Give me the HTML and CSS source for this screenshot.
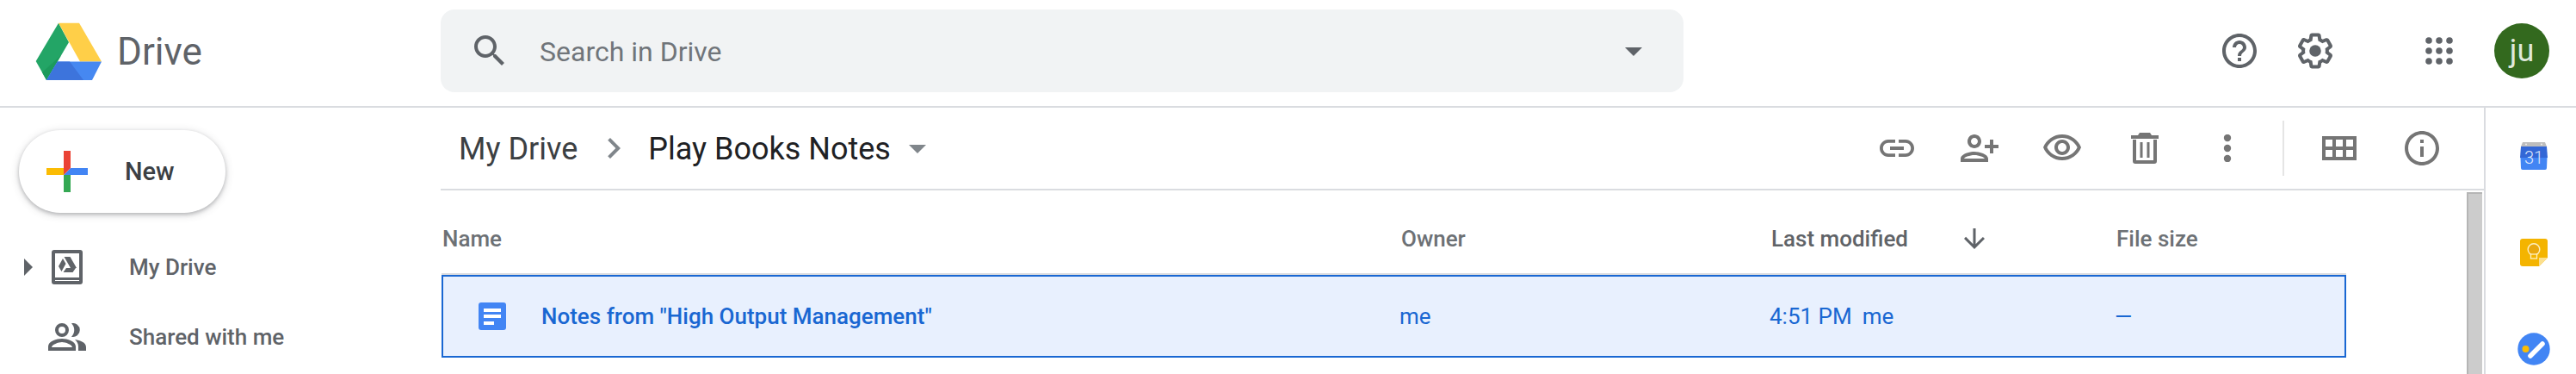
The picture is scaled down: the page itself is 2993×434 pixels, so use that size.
FILE: index.html
```html
<!DOCTYPE html>
<html lang="en">
<head>
<meta charset="utf-8">
<title>Play Books Notes - Google Drive</title>
<link rel="stylesheet" href="styles.css">
</head>
<body>
<header class="topbar">
  <div class="brand">
    <svg class="brand-logo" viewBox="0 0 77 67" width="77" height="67">
      <polygon fill="#23a566" points="27,.7 39,23 13,67 .7,45"/>
      <polygon fill="#1c9a5c" points="39,23 13,67 8,58 30,38"/>
      <polygon fill="#ffcf48" points="27,.7 51,.7 77,45.6 52,45.6"/>
      <polygon fill="#4688f1" points="25.7,45.6 77,45.6 66,67 13,67"/>
      <polygon fill="#3d74dc" points="25.7,45.6 40,45.6 56,67 13,67"/>
    </svg>
    <span class="brand-name">Drive</span>
  </div>
  <div class="search">
    <svg class="icon48 fill-grey" viewBox="0 0 24 24"><path d="M15.5 14h-.79l-.28-.27C15.41 12.59 16 11.11 16 9.5 16 5.91 13.09 3 9.5 3S3 5.91 3 9.5 5.91 16 9.5 16c1.61 0 3.09-.59 4.23-1.57l.27.28v.79l5 4.99L20.49 19l-4.99-5zm-6 0C7.01 14 5 11.99 5 9.5S7.01 5 9.5 5 14 7.01 14 9.5 11.99 14 9.5 14z"/></svg>
    <span class="search-text">Search in Drive</span>
    <svg class="icon48 fill-grey" viewBox="0 0 24 24"><path d="M7 10l5 5 5-5z"/></svg>
  </div>
  <div class="actions">
    <svg class="icon48 fill-grey" viewBox="0 0 24 24"><path d="M11 18h2v-2h-2v2zm1-16C6.48 2 2 6.48 2 12s4.48 10 10 10 10-4.48 10-10S17.52 2 12 2zm0 18c-4.41 0-8-3.59-8-8s3.59-8 8-8 8 3.59 8 8-3.59 8-8 8zm0-14c-2.21 0-4 1.79-4 4h2c0-1.1.9-2 2-2s2 .9 2 2c0 2-3 1.75-3 5h2c0-2.25 3-2.5 3-5 0-2.21-1.79-4-4-4z"/></svg>
    <svg class="icon48 gear fill-grey" viewBox="0 0 24 24"><path d="M13.85 22.25h-3.7c-.74 0-1.36-.54-1.45-1.27l-.27-1.89c-.27-.14-.53-.29-.79-.46l-1.8.72c-.7.26-1.47-.03-1.81-.65L2.2 15.53c-.35-.66-.2-1.44.36-1.88l1.53-1.19c-.01-.15-.02-.3-.02-.46 0-.15.01-.31.02-.46l-1.52-1.19c-.59-.45-.74-1.26-.37-1.88l1.85-3.19c.34-.62 1.11-.9 1.79-.63l1.81.73c.26-.17.52-.32.78-.46l.27-1.91c.09-.7.71-1.25 1.44-1.25h3.7c.74 0 1.36.54 1.45 1.27l.27 1.89c.27.14.53.29.79.46l1.8-.72c.71-.26 1.48.03 1.82.65l1.84 3.18c.36.66.2 1.44-.36 1.88l-1.52 1.19c.01.15.02.3.02.46s-.01.31-.02.46l1.52 1.19c.56.45.72 1.23.37 1.86l-1.86 3.22c-.34.62-1.11.9-1.8.63l-1.8-.72c-.26.17-.52.32-.78.46l-.27 1.91c-.1.68-.72 1.22-1.45 1.22zm-3.23-2h2.76l.37-2.55.53-.22c.44-.18.88-.44 1.34-.78l.45-.34 2.38.96 1.38-2.4-2.03-1.58.07-.56c.03-.26.06-.51.06-.78s-.03-.53-.06-.78l-.07-.56 2.03-1.58-1.39-2.4-2.39.96-.45-.35c-.42-.32-.87-.58-1.33-.77l-.52-.22-.37-2.55h-2.76l-.37 2.55-.53.21c-.44.19-.88.44-1.34.79l-.45.33-2.38-.95-1.39 2.39 2.03 1.58-.07.56a7 7 0 0 0-.06.79c0 .26.02.53.06.78l.07.56-2.03 1.58 1.38 2.4 2.39-.96.45.35c.43.33.86.58 1.33.77l.53.22.38 2.55z"/><circle cx="12" cy="12" r="3.4"/></svg>
    <svg class="apps fill-grey" viewBox="0 0 32 32" width="32" height="32">
      <circle cx="4" cy="4" r="3.8"/><circle cx="16" cy="4" r="3.8"/><circle cx="28" cy="4" r="3.8"/>
      <circle cx="4" cy="16" r="3.8"/><circle cx="16" cy="16" r="3.8"/><circle cx="28" cy="16" r="3.8"/>
      <circle cx="4" cy="28" r="3.8"/><circle cx="16" cy="28" r="3.8"/><circle cx="28" cy="28" r="3.8"/>
    </svg>
    <div class="avatar">ju</div>
  </div>
</header>
<div class="workspace">
  <nav class="sidebar">
    <button class="new-btn">
      <svg viewBox="0 0 48 48" width="48" height="48">
        <rect fill="#fbbc04" x="0" y="20" width="20" height="8"/>
        <rect fill="#34a853" x="20" y="28" width="8" height="20"/>
        <polygon fill="#4285f4" points="28,20 48,20 48,28 20,28"/>
        <polygon fill="#ea4335" points="20,0 28,0 28,20 20,28"/>
      </svg>
      <span>New</span>
    </button>
    <div class="nav-item">
      <svg class="nav-caret fill-grey" viewBox="0 0 10 20" width="10" height="20"><path d="M0 0l10 10-10 10z"/></svg>
      <span class="nav-icon">
        <svg class="fill-grey" viewBox="0 0 36 40" width="36" height="40">
          <path fill-rule="evenodd" d="M3 0h30a3 3 0 0 1 3 3v34a3 3 0 0 1-3 3H3a3 3 0 0 1-3-3V3a3 3 0 0 1 3-3zm1 4v28h28V4zm0 31v1h28v-1z"/>
          <path d="M14.5 8h7l7.500 13h-7zM13 10l3.500 6-5 9-3.500-6zM17 21h11l-3.500 5h-11z"/>
        </svg>
      </span>
      <span class="nav-label">My Drive</span>
    </div>
    <div class="nav-item">
      <span class="nav-caret"></span>
      <span class="nav-icon">
        <svg class="fill-grey" viewBox="0 0 44 32" width="44" height="32">
          <path fill-rule="evenodd" d="M16 0a8 8 0 1 1 0 16 8 8 0 0 1 0-16zm0 4a4 4 0 1 0 0 8 4 4 0 0 0 0-8z"/>
          <path d="M27 .2a8 8 0 1 1 0 15.600a11 11 0 0 0 0-15.600z"/>
          <path fill-rule="evenodd" d="M0 32v-5c0-6 10-9 16-9s16 3 16 9v5zm4-4h24c0-3-8-6-12-6S4 25 4 28z"/>
          <path d="M31 19c6 1 13 3 13 9v4h-9v-5c0-3-1.500-6-4-8z"/>
        </svg>
      </span>
      <span class="nav-label">Shared with me</span>
    </div>
  </nav>
  <main class="content">
    <div class="toolbar">
      <div class="crumbs">
        <span class="crumb">My Drive</span>
        <svg class="icon48 crumb-sep fill-soft" viewBox="0 0 24 24"><path d="M10 6L8.590 7.410 13.170 12l-4.580 4.590L10 18l6-6z"/></svg>
        <span class="crumb crumb-current">Play Books Notes</span>
        <svg class="icon48 crumb-menu fill-soft" viewBox="0 0 24 24"><path d="M7 10l5 5 5-5z"/></svg>
      </div>
      <div class="tool"><svg class="icon48 fill-tool" viewBox="0 0 24 24"><path d="M3.900 12c0-1.710 1.390-3.100 3.100-3.100h4V7H7c-2.760 0-5 2.240-5 5s2.240 5 5 5h4v-1.900H7c-1.710 0-3.100-1.390-3.100-3.100zM8 13h8v-2H8v2zm9-6h-4v1.900h4c1.710 0 3.100 1.390 3.100 3.100s-1.390 3.100-3.100 3.100h-4V17h4c2.760 0 5-2.240 5-5s-2.240-5-5-5z"/></svg></div>
      <div class="tool"><svg class="icon48 mirror fill-tool" viewBox="0 0 24 24"><path d="M15 12c2.210 0 4-1.790 4-4s-1.790-4-4-4-4 1.790-4 4 1.790 4 4 4zm0-6c1.100 0 2 .9 2 2s-.9 2-2 2-2-.9-2-2 .9-2 2-2zm0 8c-2.670 0-8 1.340-8 4v2h16v-2c0-2.660-5.330-4-8-4zm-6 4c.22-.72 3.310-2 6-2 2.700 0 5.800 1.290 6 2H9zm-3-3v-3h3v-2H6V7H4v3H1v2h3v3h2z"/></svg></div>
      <div class="tool"><svg class="icon48 fill-tool" viewBox="0 0 24 24"><path d="M12 6c3.790 0 7.170 2.130 8.820 5.500C19.170 14.870 15.790 17 12 17s-7.170-2.130-8.820-5.500C4.830 8.130 8.210 6 12 6m0-2C7 4 2.730 7.110 1 11.500 2.730 15.890 7 19 12 19s9.270-3.110 11-7.500C21.270 7.110 17 4 12 4zm0 5c1.380 0 2.500 1.120 2.500 2.500S13.380 14 12 14s-2.500-1.120-2.500-2.500S10.620 9 12 9m0-2c-2.480 0-4.500 2.020-4.500 4.500S9.520 16 12 16s4.500-2.020 4.500-4.500S14.480 7 12 7z"/></svg></div>
      <div class="tool"><svg class="fill-tool" viewBox="0 0 32 36" width="32" height="36"><path d="M10 0h12l2 3h8v4H0V3h8zM2 8h4v24h20V8h4v25a3 3 0 0 1-3 3H5a3 3 0 0 1-3-3zM10.500 11h3v18h-3zM18.500 11h3v18h-3z"/></svg></div>
      <div class="tool"><svg class="fill-tool" viewBox="0 0 10 32" width="10" height="32"><circle cx="5" cy="4" r="4.200"/><circle cx="5" cy="16" r="4.200"/><circle cx="5" cy="28" r="4.200"/></svg></div>
      <span class="tool-divider"></span>
      <div class="tool"><svg class="fill-tool" viewBox="0 0 40 28" width="40" height="28"><path fill-rule="evenodd" d="M0 0h40v28H0zM4 4v8h8V4zm12 0v8h8V4zm12 0v8h8V4zM4 16v8h8v-8zm12 0v8h8v-8zm12 0v8h8v-8z"/></svg></div>
      <div class="tool"><svg class="icon48 fill-tool" viewBox="0 0 24 24"><path d="M11 7h2v2h-2zm0 4h2v6h-2zm1-9C6.480 2 2 6.480 2 12s4.480 10 10 10 10-4.480 10-10S17.520 2 12 2zm0 18c-4.410 0-8-3.590-8-8s3.590-8 8-8 8 3.590 8 8-3.590 8-8 8z"/></svg></div>
    </div>
    <div class="list-area">
      <div class="list">
        <div class="list-head">
          <span class="col-title">Name</span>
          <span class="col-title">Owner</span>
          <span class="col-title col-sorted">Last modified
            <svg class="sort-arrow fill-grey" viewBox="0 0 24 24" width="36" height="36"><path d="M20 12l-1.410-1.410L13 16.170V4h-2v12.170l-5.580-5.590L4 12l8 8 8-8z"/></svg>
          </span>
          <span class="col-title">File size</span>
        </div>
        <div class="list-row">
          <span class="file-name">
            <svg viewBox="0 0 32 32" width="32" height="32" class="doc-icon"><rect width="32" height="32" rx="3" fill="#4285f4"/><rect x="6" y="7" width="20" height="4" fill="#fff"/><rect x="6" y="14" width="20" height="4" fill="#fff"/><rect x="6" y="22" width="12" height="4" fill="#fff"/></svg>
            Notes from "High Output Management"
          </span>
          <span>me</span>
          <span class="modified"><span>4:51 PM</span><span>me</span></span>
          <span>—</span>
        </div>
      </div>
      <div class="scrollbar"></div>
    </div>
  </main>
  <aside class="addons">
    <svg class="addon-cal" viewBox="0 0 32 32" width="32" height="32">
      <path fill="#bdbdbd" d="M3 0h26l2 5H1z"/>
      <circle cx="7" cy="2.500" r="1" fill="#eee"/><circle cx="25" cy="2.500" r="1" fill="#eee"/>
      <path fill="#3367d6" d="M1 5h30l1 13H0z"/>
      <path fill="#4285f4" d="M.5 18h31l-.5 12a2 2 0 0 1-2 2H3a2 2 0 0 1-2-2z"/>
      <text x="16" y="25" text-anchor="middle" class="cal-text">31</text>
    </svg>
    <svg class="addon-keep" viewBox="0 0 32 32" width="32" height="32">
      <path fill="#f4b400" d="M3 0h26a3 3 0 0 1 3 3v19L22 32H3a3 3 0 0 1-3-3V3a3 3 0 0 1 3-3z"/>
      <path fill="#fbdf8e" d="M22 22h10L22 32z"/>
      <circle cx="16" cy="12.500" r="6.800" fill="#eaa80f" stroke="#fdf0c4" stroke-width="1.400"/>
      <rect x="12.500" y="18" width="7" height="5" fill="#f4b400" stroke="#fdf0c4" stroke-width="1.300"/>
    </svg>
    <svg class="addon-tasks" viewBox="0 0 38 38" width="38" height="38">
      <circle cx="19" cy="19" r="18.700" fill="#4285f4"/>
      <path d="M15 27L29 13" stroke="#fff" stroke-width="5.500" stroke-linecap="round"/>
      <circle cx="9.500" cy="19" r="4" fill="#fbbc04"/>
    </svg>
  </aside>
</div>
</body>
</html>
```

FILE: styles.css
```css
* { box-sizing: border-box; }
html, body { margin: 0; padding: 0; height: 434px; overflow: hidden; background: #fff; }
body { font-family: Roboto, "Liberation Sans", sans-serif; color: #5f6368; }
svg { display: block; flex: none; }
.icon48 { width: 48px; height: 48px; }
.fill-grey { fill: #5f6368; }
.fill-soft { fill: #80868b; }
.fill-tool { fill: #757575; }
.mirror { transform: scaleX(-1); }

.topbar { display: flex; align-items: center; height: 125px; border-bottom: 2px solid #dadce0; padding-bottom: 5px; }
.brand { display: flex; align-items: center; width: 512px; padding-left: 41px; flex: none; }
.brand-name { margin: 2px 0 0 18px; font-size: 44px; color: #5f6368; line-height: 1; }
.search { display: flex; align-items: center; width: 1444px; height: 96px; flex: none; padding: 0 34px 0 33px; background: #f1f3f4; border-radius: 16px; }
.search-text { flex: 1; margin: 2px 0 0 34px; font-size: 32px; font-weight: 400; color: #70757a; }
.actions { display: flex; align-items: center; margin-left: 622px; }
.gear { margin-left: 40px; }
.apps { margin-left: 104px; }
.avatar { display: flex; align-items: center; justify-content: center; width: 64px; height: 64px; margin-left: 48px; border-radius: 50%; background: #33691e; color: #dfe8da; font-size: 36px; line-height: 1; }

.workspace { display: flex; height: 309px; }
.sidebar { width: 512px; flex: none; padding-top: 26px; }
.new-btn { display: flex; align-items: center; width: 240px; height: 96px; margin-left: 22px; padding: 0 0 0 32px; border: 0; border-radius: 48px; background: #fff; box-shadow: 0 2px 4px rgba(60,64,67,.3), 0 2px 8px 2px rgba(60,64,67,.13); font-family: inherit; font-size: 29px; font-weight: 500; color: #3c4043; }
.new-btn span { margin-left: 43px; }
.nav-item { display: flex; align-items: center; height: 80px; padding-left: 28px; margin-bottom: 1px; }
.new-btn + .nav-item { margin-top: 23px; }
.nav-caret { display: block; width: 10px; flex: none; }
.nav-icon { display: flex; align-items: center; justify-content: center; width: 48px; margin-left: 16px; flex: none; }
.nav-label { margin-left: 48px; font-size: 26px; font-weight: 500; color: #5f6368; white-space: nowrap; }

.content { display: flex; flex-direction: column; flex: 1; min-width: 0; }
.toolbar { display: flex; align-items: center; height: 96px; padding-right: 24px; border-bottom: 2px solid #dadce0; }
.crumbs { display: flex; align-items: center; flex: 1; padding-left: 21px; }
.crumb { margin-top: 2px; font-size: 36px; color: #3c4043; line-height: 1; white-space: nowrap; }
.crumb-current { color: #202124; }
.crumb-sep { margin: 0 16px 0 18px; }
.crumb-menu { margin-left: 7px; }
.tool { display: flex; align-items: center; justify-content: center; width: 96px; height: 48px; flex: none; }
.tool-divider { width: 2px; height: 64px; margin: 0 16px; background: #e5e5e5; flex: none; }

.list-area { display: flex; flex: 1; min-height: 0; }
.list { flex: 1; min-width: 0; padding-left: 1px; }
.list-head { display: grid; grid-template-columns: 1114px 430px 401px 1fr; align-items: center; height: 98px; width: 2213px; padding: 16px 0 0 1px; border-bottom: 2px solid #dadce0; }
.col-title { font-size: 26px; font-weight: 500; color: #6d7175; }
.col-sorted { display: flex; align-items: center; color: #5f6368; }
.sort-arrow { margin-left: 59px; }
.list-row { display: grid; grid-template-columns: 1111px 430px 401px 1fr; align-items: center; height: 96px; width: 2213px; border: 2px solid #1967d2; background: #e8f0fe; font-size: 26px; color: #1967d2; }
.file-name { display: flex; align-items: center; padding-left: 41px; font-weight: 500; }
.doc-icon { margin-right: 41px; }
.modified { display: flex; gap: 12px; }
.scrollbar { width: 18px; margin: 2px 2px 0 0; background: #ccc; border-left: 2px solid #b5b5b5; border-top: 2px solid #b5b5b5; flex: none; }

.addons { display: flex; flex-direction: column; align-items: center; width: 107px; flex: none; padding: 40px 30px 0 37px; border-left: 2px solid #dadce0; }
.addon-keep { margin-top: 80px; }
.addon-tasks { margin-top: 77px; }
.cal-text { font-family: Roboto, sans-serif; font-size: 20px; font-weight: 300; fill: #dce6fb; }
```
